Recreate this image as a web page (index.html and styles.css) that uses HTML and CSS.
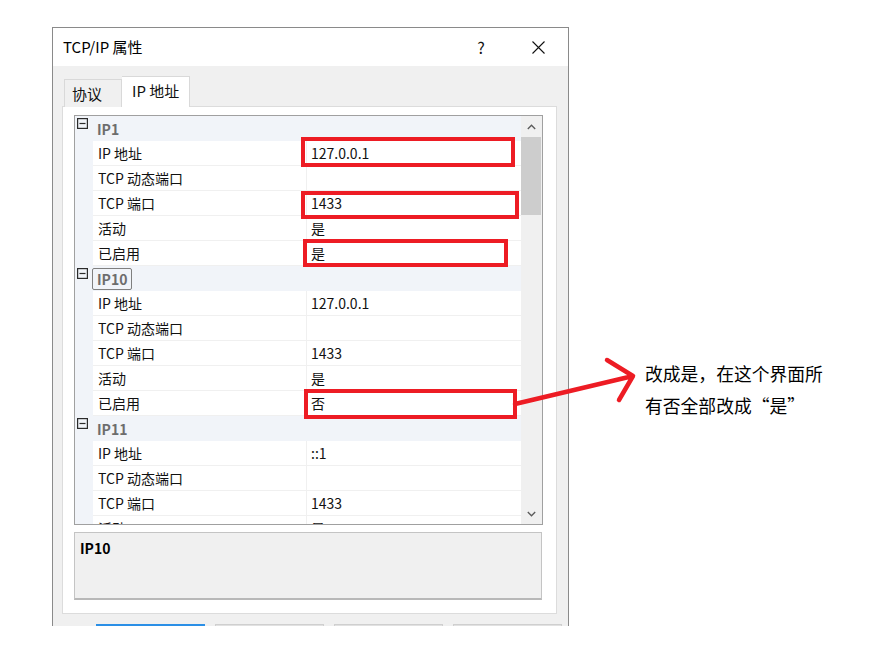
FILE: index.html
```html
<!DOCTYPE html>
<html lang="zh-CN">
<head>
<meta charset="utf-8">
<title>TCP/IP 属性</title>
<link rel="stylesheet" href="styles.css">
</head>
<body>
<div class="stage">
  <div class="dialog">
    <div class="titlebar">
      <span class="title">TCP/IP 属性</span>
      <span class="tb-help">?</span>
      <span class="tb-close">
        <svg width="13" height="13" viewBox="0 0 13 13"><path d="M0.5 0.5 L12.5 12.5 M12.5 0.5 L0.5 12.5" stroke="#111" stroke-width="1.1" fill="none"/></svg>
      </span>
    </div>
    <div class="body">
      <div class="tabs">
        <div class="tab">协议</div>
        <div class="tab active">IP 地址</div>
      </div>
      <div class="panel">
        <div class="grid">
          <div class="rows">
            <div class="cat"><svg class="minus" width="11" height="11" viewBox="0 0 11 11"><rect x="0.6" y="0.6" width="9.8" height="9.8" fill="none" stroke="#2b2b2b" stroke-width="1.2"/><path d="M2.5 5.5 H8.5" stroke="#2b2b2b" stroke-width="1.2"/></svg><span class="cat-label">IP1</span></div>
            <div class="prop"><span class="name">IP 地址</span><span class="val">127.0.0.1</span></div>
            <div class="prop"><span class="name">TCP 动态端口</span><span class="val"></span></div>
            <div class="prop"><span class="name">TCP 端口</span><span class="val">1433</span></div>
            <div class="prop"><span class="name">活动</span><span class="val">是</span></div>
            <div class="prop"><span class="name">已启用</span><span class="val">是</span></div>
            <div class="cat"><svg class="minus" width="11" height="11" viewBox="0 0 11 11"><rect x="0.6" y="0.6" width="9.8" height="9.8" fill="none" stroke="#2b2b2b" stroke-width="1.2"/><path d="M2.5 5.5 H8.5" stroke="#2b2b2b" stroke-width="1.2"/></svg><span class="cat-label focus">IP10</span></div>
            <div class="prop"><span class="name">IP 地址</span><span class="val">127.0.0.1</span></div>
            <div class="prop"><span class="name">TCP 动态端口</span><span class="val"></span></div>
            <div class="prop"><span class="name">TCP 端口</span><span class="val">1433</span></div>
            <div class="prop"><span class="name">活动</span><span class="val">是</span></div>
            <div class="prop"><span class="name">已启用</span><span class="val">否</span></div>
            <div class="cat"><svg class="minus" width="11" height="11" viewBox="0 0 11 11"><rect x="0.6" y="0.6" width="9.8" height="9.8" fill="none" stroke="#2b2b2b" stroke-width="1.2"/><path d="M2.5 5.5 H8.5" stroke="#2b2b2b" stroke-width="1.2"/></svg><span class="cat-label">IP11</span></div>
            <div class="prop"><span class="name">IP 地址</span><span class="val">::1</span></div>
            <div class="prop"><span class="name">TCP 动态端口</span><span class="val"></span></div>
            <div class="prop"><span class="name">TCP 端口</span><span class="val">1433</span></div>
            <div class="prop"><span class="name">活动</span><span class="val">是</span></div>
          </div>
          <div class="scrollbar">
            <div class="sb-btn">
              <svg width="9" height="6" viewBox="0 0 9 6"><path d="M0.8 5 L4.5 1.2 L8.2 5" stroke="#5a5a5a" stroke-width="1.3" fill="none"/></svg>
            </div>
            <div class="sb-thumb"></div>
            <div class="sb-track"></div>
            <div class="sb-btn">
              <svg width="9" height="6" viewBox="0 0 9 6"><path d="M0.8 1 L4.5 4.8 L8.2 1" stroke="#5a5a5a" stroke-width="1.3" fill="none"/></svg>
            </div>
          </div>
        </div>
        <div class="desc"><span class="desc-title">IP10</span></div>
      </div>
      <div class="buttons">
        <div class="btn default"></div>
        <div class="btn"></div>
        <div class="btn"></div>
        <div class="btn"></div>
      </div>
    </div>
  </div>

  <div class="mark mark-1"></div>
  <div class="mark mark-2"></div>
  <div class="mark mark-3"></div>
  <div class="mark mark-4"></div>
  <svg class="arrow" width="876" height="649" viewBox="0 0 876 649">
    <path d="M515 404 L633 376 M607 360 L633 376 L619 400" stroke="#ed1c24" stroke-width="4.5" fill="none" stroke-linecap="round" stroke-linejoin="round"/>
  </svg>
  <div class="note">改成是，在这个界面所<br>有否全部改成“是”</div>
</div>
</body>
</html>
```

FILE: styles.css
```css
* { box-sizing: border-box; }

html, body {
  margin: 0;
  padding: 0;
  background: #ffffff;
}

body {
  font-family: "Noto Sans CJK SC", "Noto Sans", sans-serif;
  color: #000;
  width: 876px;
  height: 649px;
  overflow: hidden;
}

.stage {
  position: relative;
  width: 876px;
  height: 649px;
  padding: 27px 0 0 52px;
}

.dialog {
  width: 517px;
  height: 599px;
  border: 1px solid #8a8a8a;
  border-bottom: none;
  overflow: hidden;
  background: #f0f0f0;
}

.titlebar {
  height: 38px;
  background: #ffffff;
  display: flex;
  align-items: center;
  padding-left: 10px;
}

.title {
  font-size: 15px;
  line-height: 38px;
  flex: 1;
}

.tb-help {
  width: 46px;
  text-align: center;
  font-size: 16px;
  line-height: 38px;
  color: #111;
}

.tb-close {
  width: 46px;
  margin-left: 11px;
  margin-right: 7px;
  display: flex;
  justify-content: center;
  align-items: center;
  height: 38px;
}

.body {
  height: 560px;
  background: #f0f0f0;
}

.tabs {
  height: 41px;
  display: flex;
  align-items: flex-end;
  padding-left: 11px;
  position: relative;
  z-index: 1;
}

.tab {
  height: 28px;
  width: 58px;
  border: 1px solid #d9d9d9;
  border-bottom: none;
  background: #f0f0f0;
  font-size: 15px;
  line-height: 27px;
  padding-left: 7px;
  color: #111;
}

.tab.active {
  height: 31px;
  width: 68px;
  background: #ffffff;
  padding-left: 10px;
  line-height: 28px;
  border-left: none;
}

.panel {
  margin: -1px 0 0 9px;
  width: 495px;
  height: 508px;
  background: #ffffff;
  border: 1px solid #dcdcdc;
  padding: 8px 0 0 11px;
}

.grid {
  width: 469px;
  height: 410px;
  border: 1px solid #a0a0a0;
  display: flex;
  background: #f1f4f9;
}

.rows {
  flex: 1;
  overflow: hidden;
  display: flex;
  flex-direction: column;
}

.cat {
  height: 25px;
  flex: none;
  display: flex;
  align-items: flex-start;
  position: relative;
}

.minus {
  margin: 2px 0 0 2px;
  flex: none;
}

.cat-label {
  margin-left: 4px;
  margin-top: 2px;
  height: 22px;
  border: 1px solid transparent;
  border-radius: 2px;
  padding: 0 4px;
  font-size: 14px;
  font-weight: bold;
  line-height: 20px;
  color: #6d6d6d;
}

.cat-label.focus {
  border-color: #7f7f7f;
}

.prop {
  height: 25px;
  flex: none;
  margin-left: 18px;
  background: #ffffff;
  border-bottom: 1px solid #f0f0f0;
  display: flex;
  font-size: 14px;
  line-height: 24px;
  color: #111;
}

.name {
  width: 214px;
  padding-left: 5px;
  border-right: 1px solid #f0f0f0;
  white-space: nowrap;
}

.val {
  flex: 1;
  padding-left: 4px;
  white-space: nowrap;
}

.scrollbar {
  width: 21px;
  flex: none;
  background: #f0f0f0;
  display: flex;
  flex-direction: column;
}

.sb-btn {
  height: 21px;
  flex: none;
  display: flex;
  align-items: center;
  justify-content: center;
}

.sb-thumb {
  height: 78px;
  flex: none;
  background: #cdcdcd;
  margin: 0 1px 0 0;
}

.sb-track {
  flex: 1;
}

.desc {
  margin-top: 7px;
  width: 468px;
  height: 68px;
  background: #f0f0f0;
  border: 1px solid #c4c4c4;
  border-bottom: 2px solid #b8b8b8;
  padding: 2px 5px;
}

.desc-title {
  font-size: 14px;
  font-weight: bold;
  line-height: 20px;
  color: #000;
}

.buttons {
  display: flex;
  padding: 10px 0 0 43px;
  gap: 10px;
}

.btn {
  width: 109px;
  height: 23px;
  background: #e1e1e1;
  border: 1px solid #cfcfcf;
}

.btn.default {
  border: 2px solid #2b8fe6;
}

.mark {
  position: absolute;
  border: 4px solid #ed1c24;
}

.mark-1 { left: 301px; top: 137px; width: 214px; height: 30px; }
.mark-2 { left: 301px; top: 191px; width: 218px; height: 28px; }
.mark-3 { left: 303px; top: 239px; width: 205px; height: 28px; }
.mark-4 { left: 304px; top: 389px; width: 213px; height: 30px; }

.arrow {
  position: absolute;
  left: 0;
  top: 0;
  pointer-events: none;
}

.note {
  position: absolute;
  left: 645px;
  top: 357px;
  font-size: 17.8px;
  line-height: 32px;
  color: #000;
  white-space: nowrap;
}
```
